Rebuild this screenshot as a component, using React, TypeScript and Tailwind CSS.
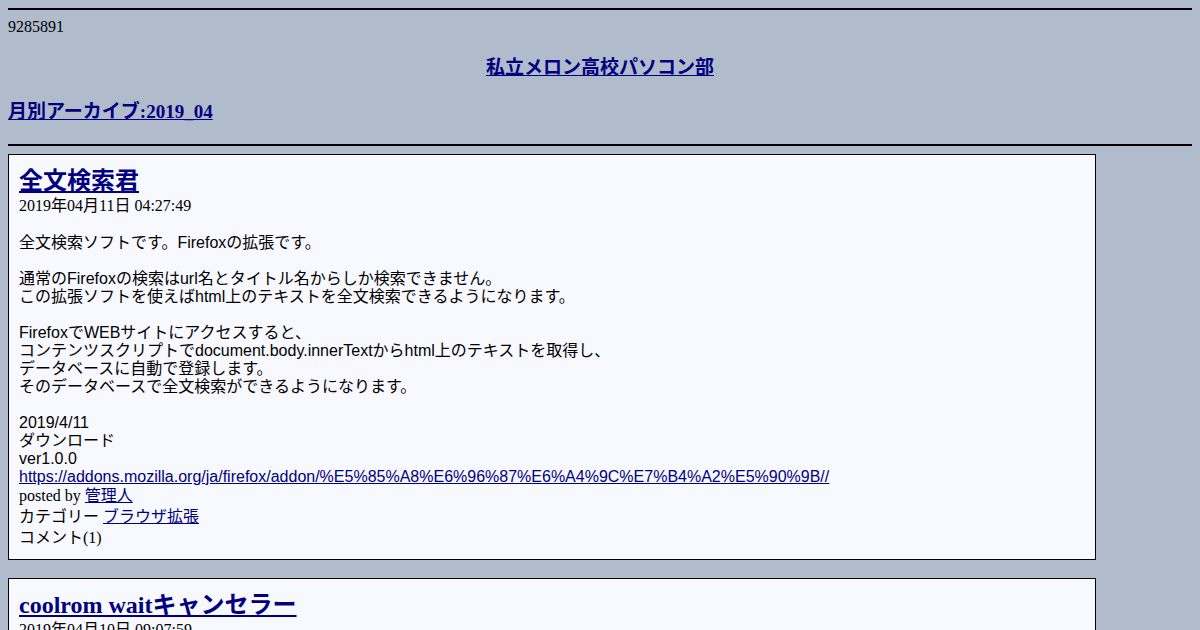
const serif = "font-['Liberation_Serif','Noto_Sans_CJK_JP',serif]";
const sans = "font-['Liberation_Sans','Noto_Sans_CJK_JP',sans-serif]";

type Post = {
  title: string;
  date: string;
  body: string[];
  category: string;
  comments: number;
};

const posts: Post[] = [
  {
    title: '全文検索君',
    date: '2019年04月11日 04:27:49',
    body: [
      '全文検索ソフトです。Firefoxの拡張です。',
      '',
      '通常のFirefoxの検索はurl名とタイトル名からしか検索できません。',
      'この拡張ソフトを使えばhtml上のテキストを全文検索できるようになります。',
      '',
      'FirefoxでWEBサイトにアクセスすると、',
      'コンテンツスクリプトでdocument.body.innerTextからhtml上のテキストを取得し、',
      'データベースに自動で登録します。',
      'そのデータベースで全文検索ができるようになります。',
      '',
      '2019/4/11',
      'ダウンロード',
      'ver1.0.0',
      'https://addons.mozilla.org/ja/firefox/addon/%E5%85%A8%E6%96%87%E6%A4%9C%E7%B4%A2%E5%90%9B//',
    ],
    category: 'ブラウザ拡張',
    comments: 1,
  },
  {
    title: 'coolrom waitキャンセラー',
    date: '2019年04月10日 09:07:59',
    body: [
      'coolromのダウンロード待ち時間をキャンセルするFirefoxの拡張です。',
      '',
      '2019/4/10',
      'ダウンロード',
      'ver1.0.0',
    ],
    category: 'ブラウザ拡張',
    comments: 0,
  },
];

const PostBox = ({ post }: { post: Post }) => (
  <div className="w-[1088px] border border-black bg-[#f8f8ff] px-[10px] pt-[10px] pb-[11px]">
    <h2 className="text-[24px] font-bold leading-[32px]">
      <a href="#" className="text-[#000080] underline">{post.title}</a>
    </h2>
    <div className="leading-[18px]">{post.date}</div>
    <div className={`${sans} mt-[19px] text-[16px] leading-[18px]`}>
      {post.body.map((line, i) =>
        line === '' ? (
          <div key={i} className="h-[18px]" />
        ) : line.startsWith('https://') ? (
          <div key={i}>
            <a href="#" className="text-[#000080] underline">{line}</a>
          </div>
        ) : (
          <div key={i}>{line}</div>
        )
      )}
    </div>
    <div className="leading-[20px]">
      posted by <a href="#" className="text-[#000080] underline">管理人</a>
    </div>
    <div className="leading-[21px]">
      カテゴリー <a href="#" className="text-[#000080] underline">{post.category}</a>
    </div>
    <div className="leading-[21px]">コメント({post.comments})</div>
  </div>
);

const App = () => {
  return (
    <div className={`${serif} h-screen overflow-hidden bg-[#b0bbcc] px-2 pt-2 text-[16px] text-black`}>
      <div className="h-[2px] bg-black" />
      <div className="mt-[8px] leading-[18px]">9285891</div>
      <h3 className="mt-[20px] text-center text-[19px] font-bold leading-[24px]">
        <a href="#" className="text-[#000080] underline">私立メロン高校パソコン部</a>
      </h3>
      <h3 className="mt-[20px] text-[19px] font-bold leading-[24px]">
        <a href="#" className="text-[#000080] underline">月別アーカイブ:2019_04</a>
      </h3>
      <div className="mt-[20px] h-[2px] bg-black" />
      <div className="mt-[8px] flex flex-col gap-[18px]">
        {posts.map((p) => (
          <PostBox key={p.title} post={p} />
        ))}
      </div>
    </div>
  );
};

export default App;
